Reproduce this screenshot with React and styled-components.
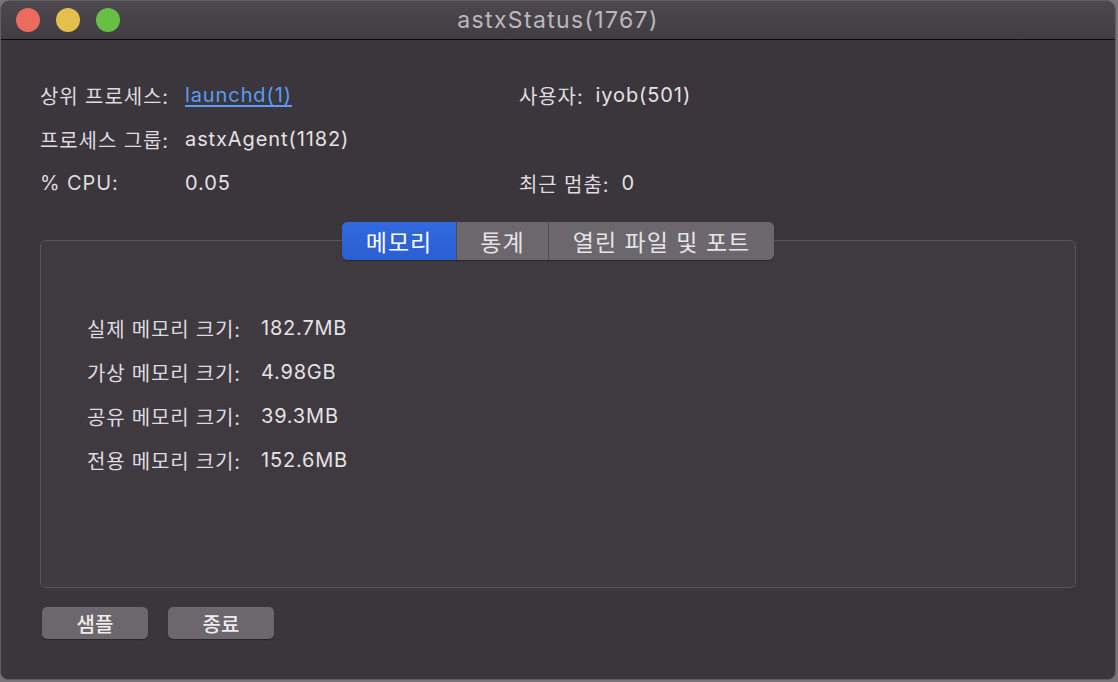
import React from "react";
import styled, { createGlobalStyle } from "styled-components";

const GlobalStyle = createGlobalStyle`
  html, body {
    margin: 0;
    padding: 0;
    background: #77757a;
  }
  body {
    font-family: Inter, "Noto Sans CJK KR", sans-serif;
  }
`;

const Window = styled.div`
  width: 1116px;
  height: 680px;
  box-sizing: border-box;
  background: #3a363b;
  border: 1px solid #625e64;
  border-radius: 10px 10px 8px 8px;
  overflow: hidden;
  display: flex;
  flex-direction: column;
  color: #dedbe0;
`;

const TitleBar = styled.div`
  height: 38px;
  flex: none;
  display: flex;
  align-items: center;
  position: relative;
  background: linear-gradient(#4c484d, #413d42);
  border-bottom: 1px solid #0c0b0c;
`;

const Lights = styled.div`
  display: flex;
  gap: 16px;
  padding-left: 15px;
`;

const Light = styled.span`
  width: 24px;
  height: 24px;
  border-radius: 50%;
  background: ${(p) => p.$color};
`;

const Title = styled.div`
  position: absolute;
  left: 0;
  right: 0;
  text-align: center;
  font-size: 23px;
  color: #bbb8bd;
  letter-spacing: 1.35px;
  pointer-events: none;
`;

const Body = styled.div`
  flex: 1;
  padding: 33px 39px 0 39px;
  display: flex;
  flex-direction: column;
`;

const InfoGrid = styled.div`
  display: grid;
  grid-template-columns: 479px 1fr;
  grid-auto-rows: 44px;
  font-size: 20px;
  letter-spacing: 0.9px;
`;

const Field = styled.div`
  display: flex;
  align-items: center;
  gap: ${(p) => (p.$inline ? "12px" : "0")};
`;

const Label = styled.span`
  width: ${(p) => (p.$w ? p.$w + "px" : "auto")};
  flex: none;
  color: #dedbe0;
`;

const Value = styled.span`
  color: #e4e2e5;
`;

const Link = styled.a`
  color: #5a9bf5;
  text-decoration: underline;
  text-underline-offset: 3px;
  cursor: pointer;
`;

const TabArea = styled.div`
  position: relative;
  margin-top: 35px;
`;

const Segments = styled.div`
  position: absolute;
  top: -18px;
  left: 50%;
  transform: translateX(-50%);
  display: flex;
  height: 38px;
  border-radius: 6px;
  overflow: hidden;
  background: #6b676c;
  box-shadow: 0 1px 1px rgba(0, 0, 0, 0.35);
`;

const Segment = styled.div`
  width: ${(p) => p.$w}px;
  display: flex;
  align-items: center;
  justify-content: center;
  font-size: 23px;
  font-weight: 400;
  letter-spacing: 1px;
  color: ${(p) => (p.$active ? "#ffffff" : "#e6e4e7")};
  background: ${(p) =>
    p.$active ? "linear-gradient(#3269de, #2a5fd2)" : "#6b676c"};
  & + & {
    border-left: 1px solid #4f4b50;
  }
`;

const Panel = styled.div`
  height: 348px;
  box-sizing: border-box;
  border: 1px solid #58545a;
  border-radius: 6px;
  background: #3e3a3f;
  padding: 65px 0 0 46px;
`;

const MemGrid = styled.div`
  display: grid;
  grid-template-columns: 174px auto;
  grid-auto-rows: 44px;
  align-items: center;
  font-size: 20px;
  letter-spacing: 0.8px;
  justify-content: start;
`;

const Buttons = styled.div`
  display: flex;
  gap: 20px;
  margin-top: 19px;
  padding-left: 2px;
`;

const Button = styled.button`
  width: 106px;
  height: 32px;
  border: none;
  border-radius: 5px;
  background: #6b676c;
  box-shadow: 0 1px 1px rgba(0, 0, 0, 0.35);
  color: #eeecef;
  font-family: Inter, "Noto Sans CJK KR", sans-serif;
  font-size: 20px;
  font-weight: 500;
  padding: 0;
`;

const memory = [
  ["실제 메모리 크기:", "182.7MB"],
  ["가상 메모리 크기:", "4.98GB"],
  ["공유 메모리 크기:", "39.3MB"],
  ["전용 메모리 크기:", "152.6MB"],
];

export default function App() {
  return (
    <>
      <GlobalStyle />
      <Window>
        <TitleBar>
          <Lights>
            <Light $color="#ed6a5e" />
            <Light $color="#e2c04b" />
            <Light $color="#67bf45" />
          </Lights>
          <Title>astxStatus(1767)</Title>
        </TitleBar>
        <Body>
          <InfoGrid>
            <Field>
              <Label $w={145}>상위 프로세스:</Label>
              <Link>launchd(1)</Link>
            </Field>
            <Field $inline>
              <Label>사용자:</Label>
              <Value>iyob(501)</Value>
            </Field>
            <Field>
              <Label $w={145}>프로세스 그룹:</Label>
              <Value>astxAgent(1182)</Value>
            </Field>
            <Field />
            <Field>
              <Label $w={145}>% CPU:</Label>
              <Value>0.05</Value>
            </Field>
            <Field $inline>
              <Label>최근 멈춤:</Label>
              <Value>0</Value>
            </Field>
          </InfoGrid>
          <TabArea>
            <Segments>
              <Segment $w={114} $active>메모리</Segment>
              <Segment $w={91}>통계</Segment>
              <Segment $w={225}>열린 파일 및 포트</Segment>
            </Segments>
            <Panel>
              <MemGrid>
                {memory.map(([k, v]) => (
                  <React.Fragment key={k}>
                    <Label>{k}</Label>
                    <Value>{v}</Value>
                  </React.Fragment>
                ))}
              </MemGrid>
            </Panel>
          </TabArea>
          <Buttons>
            <Button>샘플</Button>
            <Button>종료</Button>
          </Buttons>
        </Body>
      </Window>
    </>
  );
}
